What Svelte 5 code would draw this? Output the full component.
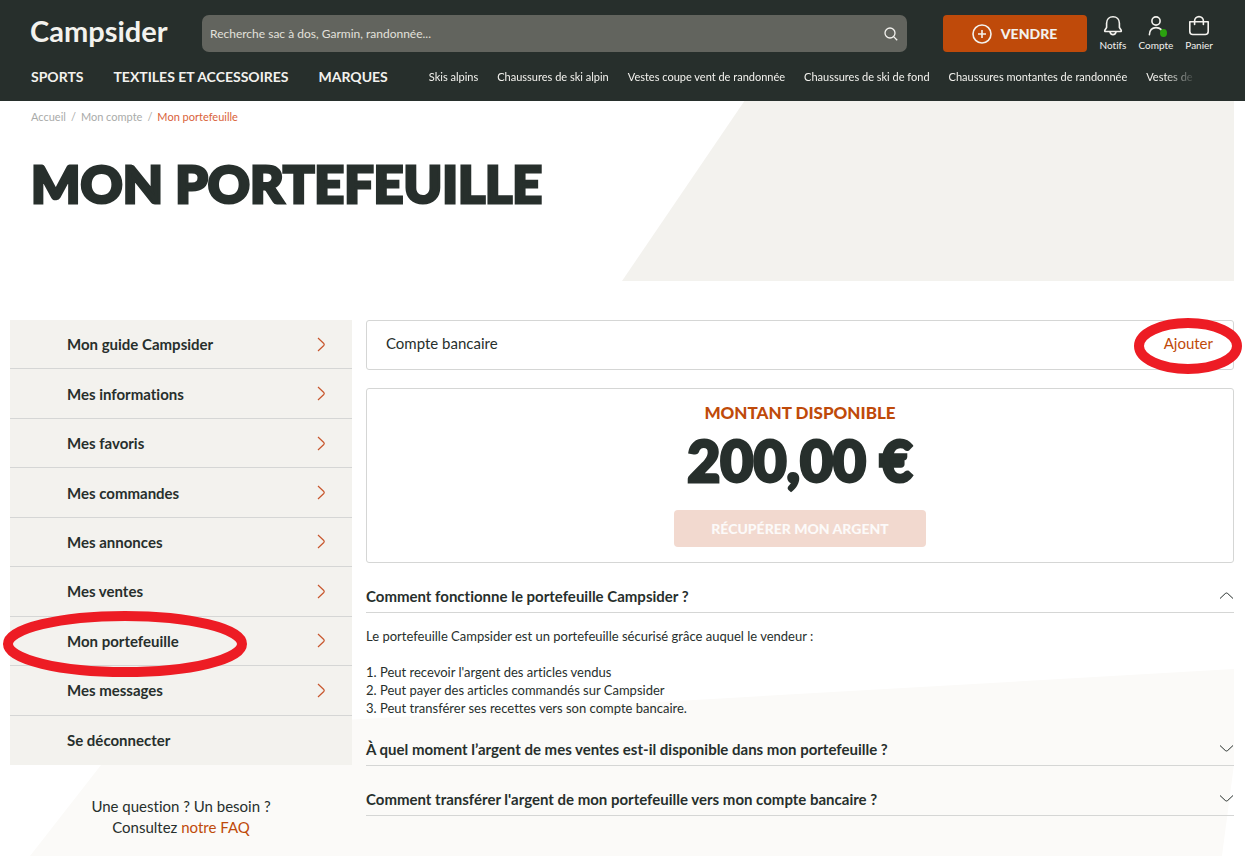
<script lang="ts">
	const categories = ['Sports', 'Textiles et accessoires', 'Marques'];

	const shortcuts = [
		'Skis alpins',
		'Chaussures de ski alpin',
		'Vestes coupe vent de randonnée',
		'Chaussures de ski de fond',
		'Chaussures montantes de randonnée',
		'Vestes de'
	];

	const menu = [
		{ label: 'Mon guide Campsider' },
		{ label: 'Mes informations' },
		{ label: 'Mes favoris' },
		{ label: 'Mes commandes' },
		{ label: 'Mes annonces' },
		{ label: 'Mes ventes' },
		{ label: 'Mon portefeuille', current: true },
		{ label: 'Mes messages' },
		{ label: 'Se déconnecter', plain: true }
	];

	const faq = [
		{
			question: 'Comment fonctionne le portefeuille Campsider ?',
			intro: 'Le portefeuille Campsider est un portefeuille sécurisé grâce auquel le vendeur :',
			lines: [
				"1. Peut recevoir l'argent des articles vendus",
				'2. Peut payer des articles commandés sur Campsider',
				'3. Peut transférer ses recettes vers son compte bancaire.'
			]
		},
		{ question: 'À quel moment l’argent de mes ventes est-il disponible dans mon portefeuille ?' },
		{ question: "Comment transférer l'argent de mon portefeuille vers mon compte bancaire ?" }
	];

	let search = $state('');
	let opened = $state(0);

	function toggle(index: number) {
		opened = opened === index ? -1 : index;
	}
</script>

<div class="page">
	<header class="header">
		<div class="header-top">
			<a class="logo" href="/">Campsider</a>

			<form class="search" role="search" onsubmit={(e) => e.preventDefault()}>
				<input
					type="text"
					aria-label="Rechercher"
					placeholder="Recherche sac à dos, Garmin, randonnée..."
					bind:value={search}
				/>
				<button type="submit" aria-label="Lancer la recherche">
					<svg width="14" height="14" viewBox="0 0 14 14">
						<circle cx="6" cy="6" r="5" />
						<path d="M9.6 9.6 13.2 13.2" />
					</svg>
				</button>
			</form>

			<button class="sell" type="button">
				<svg width="20" height="20" viewBox="0 0 20 20">
					<circle cx="10" cy="10" r="9" />
					<path d="M10 6v8M6 10h8" />
				</svg>
				Vendre
			</button>

			<nav class="tools" aria-label="Mon espace">
				<a href="/notifications">
					<svg width="22" height="22" viewBox="0 0 22 22">
						<path d="M4.600 12.500V8.300C4.600 4.300 7.300 1.700 11 1.700s6.400 2.600 6.400 6.600v4.200l1.800 2.800q.5 1.200-.8 1.200H3.600q-1.300 0-.8-1.200z" />
						<path d="M8 17c.5 1.800 1.500 2.600 3 2.600s2.500-.8 3-2.600" />
					</svg>
					Notifs
				</a>
				<a href="/compte">
					<span class="with-dot">
						<svg width="22" height="22" viewBox="0 0 22 22">
							<circle cx="11" cy="6" r="4.100" />
							<path d="M4.400 19.800c0-4.800 2.800-7.200 6.600-7.200s6.600 2.400 6.600 7.200" />
						</svg>
						<i class="dot"></i>
					</span>
					Compte
				</a>
				<a href="/panier">
					<svg width="22" height="22" viewBox="0 0 22 22">
						<path d="M1.800 6.700h18.400v9.800a3 3 0 0 1-3 3H4.800a3 3 0 0 1-3-3z" />
						<path d="M6.600 9.500V6a4.400 4.400 0 0 1 8.800 0v3.500" />
					</svg>
					Panier
				</a>
			</nav>
		</div>

		<div class="header-bottom">
			<nav class="categories" aria-label="Catégories">
				{#each categories as category}
					<a href="/categories">{category}</a>
				{/each}
			</nav>
			<nav class="shortcuts" aria-label="Recherches populaires">
				{#each shortcuts as shortcut}
					<a href="/recherche">{shortcut}</a>
				{/each}
			</nav>
		</div>
	</header>

	<section class="hero">
		<nav class="breadcrumb" aria-label="Fil d'ariane">
			<a href="/">Accueil</a>
			<span>/</span>
			<a href="/compte">Mon compte</a>
			<span>/</span>
			<a class="active" href="/compte/portefeuille" aria-current="page">Mon portefeuille</a>
		</nav>
		<h1>Mon portefeuille</h1>
	</section>

	<div class="layout">
		<aside class="sidebar">
			<ul class="menu">
				{#each menu as item}
					<li>
						<a href="/compte" aria-current={item.current ? 'page' : undefined}>
							{item.label}
							{#if !item.plain}
								<svg width="9" height="15" viewBox="0 0 9 15">
									<path d="M1 1l5.800 5.500q.9 1 0 2L1 14" />
								</svg>
							{/if}
						</a>
						{#if item.current}
							<svg class="ring ring-menu" width="246" height="66" viewBox="0 0 246 66" aria-hidden="true">
								<ellipse cx="123" cy="33" rx="117" ry="28" />
							</svg>
						{/if}
					</li>
				{/each}
			</ul>
			<p class="help">
				Une question ? Un besoin ?<br />
				Consultez <a href="/faq">notre FAQ</a>
			</p>
		</aside>

		<main class="content">
			<section class="card bank">
				<span>Compte bancaire</span>
				<span class="bank-action">
					<a href="/compte/banque">Ajouter</a>
					<svg class="ring ring-add" width="110" height="56" viewBox="0 0 110 56" aria-hidden="true">
						<ellipse cx="55" cy="28" rx="49" ry="23" />
					</svg>
				</span>
			</section>

			<section class="card balance">
				<h2>Montant disponible</h2>
				<p class="amount">200,00 €</p>
				<button type="button" disabled>Récupérer mon argent</button>
			</section>

			<section class="faq">
				{#each faq as entry, index}
					<h3>
						<button type="button" aria-expanded={opened === index} onclick={() => toggle(index)}>
							{entry.question}
							<svg class:up={opened === index} width="15" height="9" viewBox="0 0 15 9">
								<path d="M1 1.500l5.300 5q1.200 1 2.400 0l5.300-5" />
							</svg>
						</button>
					</h3>
					{#if opened === index && entry.lines}
						<div class="answer">
							<p>{entry.intro}</p>
							<p>
								{#each entry.lines as line}
									{line}<br />
								{/each}
							</p>
						</div>
					{/if}
				{/each}
			</section>
		</main>
	</div>
</div>

<style>
	:global(body) {
		margin: 0;
		background: #fff;
	}

	.page {
		--dark: #272f2c;
		--sand: #f3f2ee;
		--orange: #bf4a0a;
		--line: #d5d6d5;

		position: relative;
		box-sizing: border-box;
		min-height: 100vh;
		overflow: hidden;
		color: var(--dark);
		font-family: Lato, 'Open Sans', sans-serif;
		font-size: 14px;
		font-variant-ligatures: none;
	}

	/* slanted panel behind the bottom of the page */
	.page::before {
		content: '';
		position: absolute;
		right: 11px;
		bottom: 0;
		left: 30px;
		z-index: -1;
		height: 187px;
		background: #fbfaf8;
		clip-path: polygon(0 100%, 8% 34%, 100% 0, 100% 51%, 99% 100%);
	}

	a {
		color: inherit;
		text-decoration: none;
	}

	button {
		font: inherit;
		cursor: pointer;
	}

	svg {
		flex: none;
		fill: none;
		stroke: currentColor;
	}

	.header {
		background: var(--dark);
		color: var(--sand);
		padding: 15px 30px 0;
	}

	.header-top {
		display: flex;
		align-items: flex-start;
		height: 37px;
	}

	.logo {
		width: 172px;
		font-size: 29px;
		font-weight: 700;
		line-height: 32px;
	}

	.search {
		display: flex;
		flex: 1;
		align-items: center;
		height: 37px;
		border-radius: 7px;
		background: #62645e;
	}

	.search input {
		flex: 1;
		min-width: 0;
		padding: 0 8px;
		border: 0;
		outline: 0;
		background: none;
		color: inherit;
		font: inherit;
		font-size: 12px;
	}

	.search input::placeholder {
		color: #e2e1dc;
		opacity: 1;
	}

	.search button {
		display: flex;
		padding: 0 9px;
		border: 0;
		background: none;
		color: inherit;
		stroke-width: 1.3;
	}

	.sell {
		display: flex;
		align-items: center;
		justify-content: center;
		gap: 9px;
		width: 144px;
		height: 37px;
		margin: 0 13px 0 36px;
		padding: 0;
		border: 0;
		border-radius: 4px;
		background: var(--orange);
		color: var(--sand);
		font-size: 14px;
		font-weight: 900;
		text-transform: uppercase;
	}

	.sell svg {
		stroke-width: 1.6;
	}

	.tools {
		display: flex;
		gap: 12px;
		margin-right: 2px;
		font-size: 10px;
		line-height: 12px;
	}

	.tools a {
		display: flex;
		flex-direction: column;
		align-items: center;
		gap: 2px;
	}

	.tools svg {
		display: block;
		stroke-linecap: round;
		stroke-linejoin: round;
		stroke-width: 1.6;
	}

	.with-dot {
		position: relative;
	}

	.dot {
		position: absolute;
		right: 0;
		bottom: 0;
		width: 7px;
		height: 8px;
		border-radius: 50%;
		background: #2ba10f;
	}

	.header-bottom {
		display: flex;
		align-items: center;
		height: 49px;
	}

	.categories {
		display: flex;
		gap: 30px;
		padding-left: 1px;
		font-size: 14px;
		font-weight: 700;
		text-transform: uppercase;
		white-space: nowrap;
	}

	.shortcuts {
		display: flex;
		flex: 1;
		gap: 19px;
		min-width: 0;
		margin-left: 41px;
		margin-right: 18px;
		overflow: hidden;
		font-size: 11px;
		white-space: nowrap;
		mask-image: linear-gradient(to left, transparent, #000 32px);
	}

	.hero {
		position: relative;
		height: 180px;
		margin-right: 11px;
		padding-left: 31px;
	}

	.hero::before {
		content: '';
		position: absolute;
		top: 0;
		right: 0;
		z-index: -1;
		width: 612px;
		height: 100%;
		background: var(--sand);
		clip-path: polygon(20% 0, 100% 0, 100% 100%, 0 100%);
	}

	.breadcrumb {
		display: flex;
		gap: 5px;
		padding-top: 8px;
		color: #a9aba9;
		font-size: 11px;
		line-height: 16px;
	}

	.breadcrumb .active {
		color: #d9623a;
	}

	h1,
	.amount {
		font-weight: 900;
		line-height: 64px;
		-webkit-text-stroke: 3px currentColor;
	}

	h1 {
		margin: 26px 0 0;
		font-size: 52px;
		text-transform: uppercase;
	}

	.layout {
		display: grid;
		grid-template-columns: 342px minmax(0, 1fr);
		gap: 14px;
		padding: 39px 11px 16px 10px;
		font-size: 15px;
	}

	.menu {
		display: grid;
		grid-auto-rows: 1fr;
		min-height: 445px;
		margin: 0;
		padding: 0;
		background: var(--sand);
		list-style: none;
	}

	.menu li {
		position: relative;
		display: grid;
		border-bottom: 1px solid var(--line);
	}

	.menu li:last-child {
		border-bottom: 0;
	}

	.menu a {
		display: flex;
		align-items: center;
		justify-content: space-between;
		padding: 0 26px 0 57px;
		font-weight: 700;
	}

	.menu a svg {
		color: #c8562c;
		stroke-width: 1.2;
	}

	.ring {
		position: absolute;
		z-index: 1;
		pointer-events: none;
		stroke: #ed1c24;
		stroke-width: 10;
	}

	.ring-menu {
		top: -6px;
		left: -8px;
	}

	.help {
		margin: 31px 0 0;
		text-align: center;
		line-height: 21px;
	}

	.help a,
	.bank a {
		color: var(--orange);
	}

	.card {
		border: 1px solid var(--line);
		border-radius: 3px;
	}

	.bank {
		display: flex;
		align-items: center;
		justify-content: space-between;
		padding: 14px 20px 18px 19px;
		line-height: 16px;
	}

	.bank-action {
		position: relative;
	}

	.ring-add {
		top: -17px;
		right: -30px;
	}

	.balance {
		display: flex;
		flex-direction: column;
		align-items: center;
		margin-top: 18px;
		padding: 12px 0 15px;
	}

	.balance h2 {
		margin: 0;
		color: var(--orange);
		font-size: 17px;
		font-weight: 900;
		line-height: 24px;
		text-transform: uppercase;
	}

	.amount {
		margin: 3px 0 18px;
		font-size: 57px;
	}

	.balance button {
		min-width: 252px;
		height: 37px;
		border: 0;
		border-radius: 4px;
		background: #f2d9cf;
		color: #fcfaf9;
		font-size: 14px;
		font-weight: 900;
		text-transform: uppercase;
		cursor: default;
	}

	.faq {
		margin-top: 16px;
	}

	.faq h3 {
		margin: 0;
		font-size: 15px;
	}

	.faq h3 button {
		display: flex;
		align-items: center;
		justify-content: space-between;
		width: 100%;
		height: 34px;
		padding: 0;
		border: 0;
		border-bottom: 1px solid var(--line);
		background: none;
		color: inherit;
		font-weight: 700;
		text-align: left;
	}

	.faq h3 + h3 {
		margin-top: 16px;
	}

	.up {
		transform: rotate(180deg);
	}

	.answer {
		padding: 14px 0 15px;
		font-size: 13px;
		line-height: 18px;
	}

	.answer p {
		margin: 0 0 18px;
	}

	.answer p:last-child {
		margin: 0;
	}
</style>
